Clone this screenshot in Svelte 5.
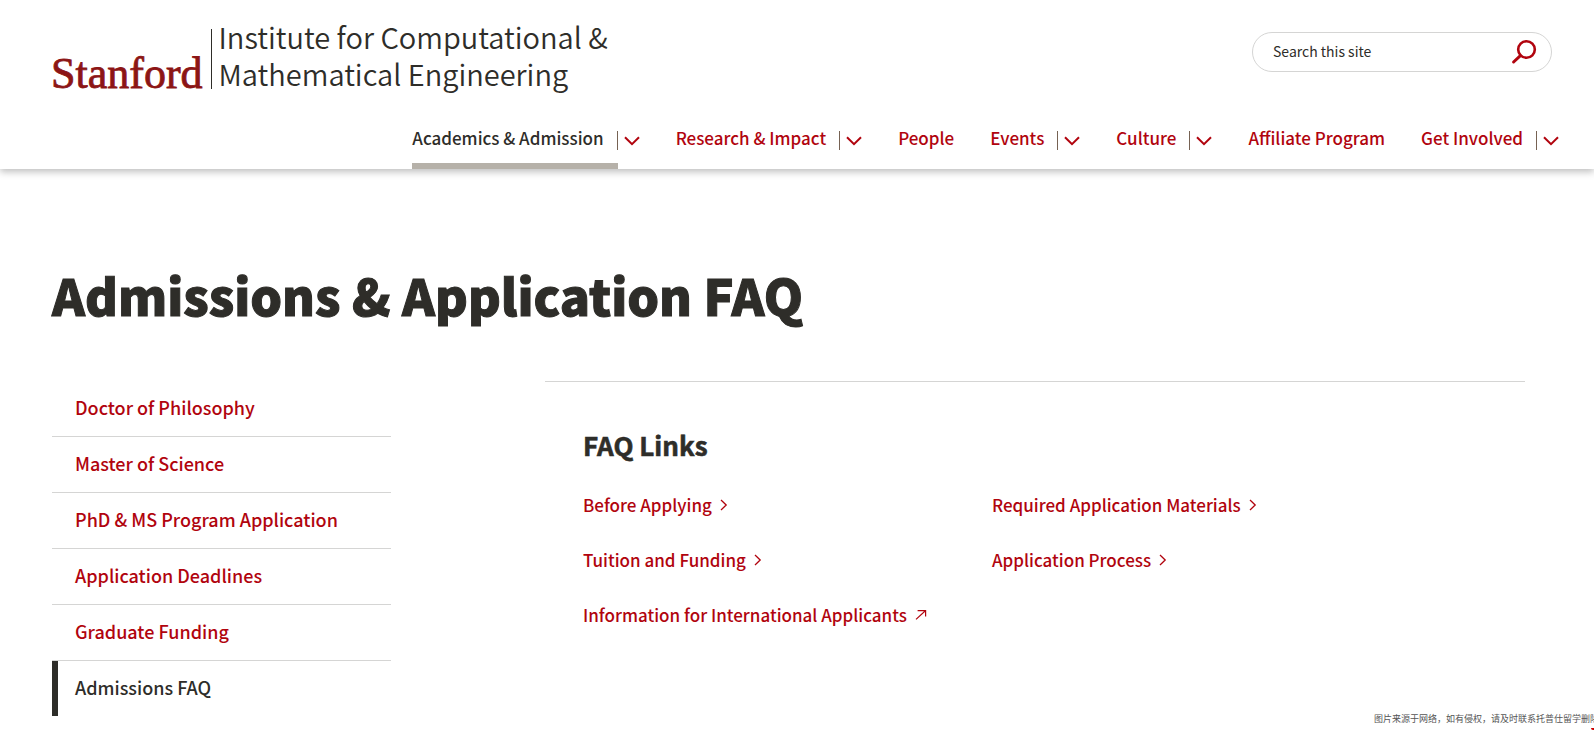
<script>
  const nav = [
    { label: 'Academics & Admission', menu: true, current: true },
    { label: 'Research & Impact', menu: true },
    { label: 'People' },
    { label: 'Events', menu: true },
    { label: 'Culture', menu: true },
    { label: 'Affiliate Program' },
    { label: 'Get Involved', menu: true }
  ];
  const pages = [
    'Doctor of Philosophy',
    'Master of Science',
    'PhD & MS Program Application',
    'Application Deadlines',
    'Graduate Funding',
    'Admissions FAQ'
  ];
  const current = 'Admissions FAQ';
  const links = [
    { label: 'Before Applying' },
    { label: 'Required Application Materials' },
    { label: 'Tuition and Funding' },
    { label: 'Application Process' },
    { label: 'Information for International Applicants', external: true }
  ];
</script>

<div class="page">
  <header>
    <div class="masthead">
      <a class="lockup" href="#home">
        <span class="wordmark">Stanford</span>
        <span class="unit">Institute for Computational &amp;<br />Mathematical Engineering</span>
      </a>
      <form class="search" role="search">
        <input type="search" aria-label="Search this site" placeholder="Search this site" />
        <button type="submit" aria-label="Search">
          <svg width="26" height="26" viewBox="0 0 26 26" fill="none" stroke="currentColor" stroke-width="3">
            <circle cx="15.5" cy="10.5" r="8.3" stroke-width="2.6" />
            <path d="M9.4 16.6 2.6 23" stroke-width="3" stroke-linecap="round" />
          </svg>
        </button>
      </form>
    </div>
    <nav aria-label="Main">
      <ul>
        {#each nav as item}
          <li>
            <a href="#nav" class:current={item.current} class:menu={item.menu}>{item.label}</a>
            {#if item.menu}
              <button type="button" aria-label="Open {item.label} menu">
                <svg width="16" height="10" viewBox="0 0 16 10" fill="none" stroke="currentColor" stroke-width="2">
                  <path d="M1 1.2 8 8.2 15 1.2" />
                </svg>
              </button>
            {/if}
          </li>
        {/each}
      </ul>
    </nav>
  </header>

  <main>
    <h1>Admissions &amp; Application FAQ</h1>
    <div class="columns">
      <nav class="side" aria-label="Section">
        <ul>
          {#each pages as label}
            <li><a href="#page" class:current={label === current}>{label}</a></li>
          {/each}
        </ul>
      </nav>
      <section>
        <h2>FAQ Links</h2>
        <ul class="links">
          {#each links as link}
            <li>
              <a href="#faq">
                {link.label}
                {#if link.external}
                  <svg width="12" height="12" viewBox="0 0 12 12" fill="none" stroke="currentColor" stroke-width="1.2">
                    <path d="M1 10.4 10.4 1.8M2.6 1.6H10.6V7.4" />
                  </svg>
                {:else}
                  <svg width="8" height="12" viewBox="0 0 8 12" fill="none" stroke="currentColor" stroke-width="1.3">
                    <path d="M1 1 6.2 6 1 11" />
                  </svg>
                {/if}
              </a>
            </li>
          {/each}
        </ul>
      </section>
    </div>
  </main>

  <p class="credit">图片来源于网络，如有侵权，请及时联系托普仕留学删除</p>
  <span class="corner"></span>
</div>

<style>
  :global(body) {
    margin: 0;
    background: #fff;
  }
  .page {
    position: relative;
    min-height: 100vh;
    overflow: hidden;
    color: #2e2d29;
    font-family: "Noto Sans CJK SC", "Noto Sans", sans-serif;
    font-size: 17px;
    line-height: 24px;
  }
  a {
    color: #b1040e;
    text-decoration: none;
  }
  ul {
    list-style: none;
    margin: 0;
    padding: 0;
  }
  svg {
    display: block;
  }
  button {
    border: 0;
    padding: 0;
    background: none;
    color: #b1040e;
    cursor: pointer;
  }
  header {
    padding-top: 18px;
    box-shadow: 0 3px 7px rgba(0, 0, 0, 0.25);
  }
  .masthead {
    display: flex;
    justify-content: space-between;
    align-items: flex-start;
    padding: 0 42px 0 51px;
  }
  .lockup {
    display: flex;
    align-items: flex-end;
  }
  .wordmark {
    margin-right: 8px;
    color: #8c1515;
    font-family: "Liberation Serif", serif;
    font-size: 44px;
    line-height: 36px;
    -webkit-text-stroke: 0.8px #8c1515;
  }
  .unit {
    position: relative;
    padding-left: 8px;
    color: #2e2d29;
    font-size: 29px;
    font-weight: 350;
    line-height: 37px;
  }
  .unit::before {
    content: "";
    position: absolute;
    left: 0;
    top: 11px;
    bottom: 3px;
    width: 1px;
    background: #2e2d29;
  }
  .search {
    display: flex;
    align-items: center;
    box-sizing: border-box;
    width: 300px;
    height: 40px;
    margin-top: 14px;
    padding: 0 14px 0 20px;
    border: 1px solid #d5d5d4;
    border-radius: 20px;
  }
  .search input {
    flex: 1;
    min-width: 0;
    border: 0;
    padding: 0 0 3px;
    outline: 0;
    background: none;
    color: #2e2d29;
    font: 14px/20px "Noto Sans CJK SC", sans-serif;
  }
  .search input::placeholder {
    color: #2e2d29;
  }
  header ul {
    display: flex;
    justify-content: flex-end;
    gap: 36px;
    padding: 34px 35px 0 0;
  }
  header li {
    display: flex;
    align-items: flex-start;
    font-weight: 500;
    white-space: nowrap;
  }
  header li a {
    padding-bottom: 13px;
    border-bottom: 6px solid transparent;
  }
  header li a.menu {
    padding-right: 14px;
  }
  header li a.current {
    border-color: #b6b1a9;
    color: #2e2d29;
  }
  header li button {
    height: 19px;
    margin: 5px 0 0 -1px;
    padding-left: 6px;
    border-left: 1px solid #766253;
  }
  main {
    padding: 92px 69px 14px 52px;
  }
  h1 {
    margin: 0 0 54px;
    font-size: 50px;
    font-weight: 900;
    line-height: 66px;
    -webkit-text-stroke: 1px #2e2d29;
  }
  .columns {
    display: grid;
    grid-template-columns: 339fr 980fr;
    gap: 154px;
  }
  .side li + li {
    border-top: 1px solid #d5d5d4;
  }
  .side a {
    display: block;
    padding: 14px 0 17px 17px;
    border-left: 6px solid transparent;
    font-size: 18px;
    font-weight: 500;
  }
  .side a.current {
    border-color: #2e2d29;
    color: #2e2d29;
  }
  section {
    padding: 45px 124px 0 38px;
    border-top: 1px solid #d5d5d4;
  }
  h2 {
    margin: 0 0 30px;
    font-size: 26px;
    font-weight: 700;
    line-height: 36px;
    -webkit-text-stroke: 0.6px #2e2d29;
  }
  .links {
    display: grid;
    grid-template-columns: 1fr 1fr;
    row-gap: 31px;
    font-weight: 500;
  }
  .links a {
    display: flex;
    align-items: center;
    gap: 8px;
    white-space: nowrap;
  }
  .credit {
    position: absolute;
    left: calc(100% - 220px);
    bottom: 4px;
    margin: 0;
    color: #555;
    font-size: 9px;
    line-height: 14px;
    white-space: nowrap;
  }
  .corner {
    position: absolute;
    right: 0;
    bottom: 0;
    width: 3px;
    height: 2px;
    background: #c00;
    border-bottom-left-radius: 2px;
  }
</style>
